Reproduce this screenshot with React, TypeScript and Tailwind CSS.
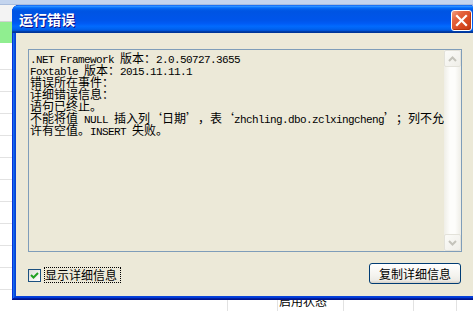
import React from "react";

const latin = "[font-family:'Liberation_Mono',monospace] text-[11px] tracking-[-0.6px]";
const cjk = "[font-family:'Noto_Sans_CJK_SC',sans-serif]";

function L({ children }: { children: React.ReactNode }) {
  return <span className={latin}>{children}</span>;
}
function QL() {
  return <span className="inline-block w-[12px] text-right">‘</span>;
}
function QR() {
  return <span className="inline-block w-[12px] text-left">’</span>;
}

function Line({ children }: { children: React.ReactNode }) {
  return <div className="h-[12px] leading-[12px] whitespace-pre">{children}</div>;
}

function GridRow({ text }: { text?: string }) {
  return (
    <div className="flex h-[22px] border-b border-[#e2e2e2]">
      <div className="w-[227px]" />
      <div className="w-[50px] border-l border-[#e2e2e2]" />
      <div className="w-[66px] border-l border-[#e2e2e2] pl-[1px] pt-[5px] text-[12px] leading-[12px] text-black">
        {text}
      </div>
      <div className="w-[70px] border-l border-[#e2e2e2]" />
      <div className="w-[43px] border-l border-[#e2e2e2]" />
      <div className="flex-1 border-l border-[#e2e2e2]" />
    </div>
  );
}

function ScrollBtn({ up }: { up: boolean }) {
  return (
    <div className="h-[17px] w-[17px] shrink-0 rounded-[2px] border border-[#e3e2da] bg-[linear-gradient(135deg,#fbfbf8_0%,#efeee8_100%)] flex items-center justify-center">
      <svg width="9" height="6" viewBox="0 0 9 6">
        {up ? (
          <polyline points="1,5 4.5,1.5 8,5" fill="none" stroke="#c4c3bb" strokeWidth="2" />
        ) : (
          <polyline points="1,1 4.5,4.5 8,1" fill="none" stroke="#c4c3bb" strokeWidth="2" />
        )}
      </svg>
    </div>
  );
}

export default function App() {
  const rows = Array.from({ length: 11 }, (_, i) => i);
  return (
    <div className={`relative w-[473px] h-[311px] overflow-hidden bg-white ${cjk}`}>
      {/* background application grid */}
      <div className="flex flex-col">
        <div className="h-[5px] bg-[#c3d4ee] border-b border-[#a8bcdc]" />
        <div className="h-[17px] bg-[#f3f3f3] border-b border-[#d2d2d2]" />
        <div className="h-[21px] bg-[#90ee90]" />
        <div className="h-[27px] border-b border-[#e2e2e2]" />
        {rows.map((i) => (
          <GridRow key={i} text={i === 10 ? "启用状态" : undefined} />
        ))}
      </div>

      {/* dialog window */}
      <div className="absolute left-[12px] top-[5px] w-[464px] h-[295px] rounded-t-[7px] overflow-hidden bg-[#0842d8] flex flex-col shadow-[inset_-1px_-1px_#00138c,inset_1px_1px_#0831d9,inset_-2px_-2px_#001ea0,inset_2px_2px_#166aee,inset_-3px_-3px_#003bda,inset_3px_3px_#0855dd]">
        {/* title bar */}
        <div className="h-[28px] shrink-0 flex items-start justify-between pl-[7px] pr-[4px] bg-[linear-gradient(180deg,#0058ee_0%,#3593ff_4%,#288eff_6%,#127dff_8%,#036ffc_10%,#0262ee_14%,#0057e5_20%,#0054e3_24%,#0055eb_56%,#005bf5_66%,#026afe_76%,#0062ef_86%,#0052d6_92%,#0040ab_94%,#003092_100%)]">
          <div className="h-[28px] flex items-center text-white font-bold text-[14px] leading-[14px] [text-shadow:1px_1px_#0f1089]">
            运行错误
          </div>
          <div className="mt-[5px] w-[21px] h-[21px] rounded-[3px] border border-white bg-[linear-gradient(135deg,#f3a083_0%,#e4643f_30%,#d84a22_65%,#c23b14_100%)] flex items-center justify-center shadow-[inset_-1px_-1px_#b5330e]">
            <svg width="13" height="13" viewBox="0 0 13 13">
              <line x1="2" y1="2" x2="11" y2="11" stroke="white" strokeWidth="2.2" strokeLinecap="square" />
              <line x1="11" y1="2" x2="2" y2="11" stroke="white" strokeWidth="2.2" strokeLinecap="square" />
            </svg>
          </div>
        </div>

        {/* frame + client */}
        <div className="flex-1 flex px-[4px] pb-[4px]">
          <div className="flex-1 bg-[#ece9d8] flex flex-col pt-[16px] px-[12px]">
            {/* text box */}
            <div className="h-[203px] border border-[#7f9db9] bg-[#ece9d8] flex">
              <div className="flex-1 pl-[1px] pt-[2px] text-[12px] text-black">
                <Line>
                  <L>.NET Framework </L>版本：<L>2.0.50727.3655</L>
                </Line>
                <Line>
                  <L>Foxtable </L>版本：<L>2015.11.11.1</L>
                </Line>
                <Line>错误所在事件：</Line>
                <Line>详细错误信息：</Line>
                <Line>语句已终止。</Line>
                <Line>
                  不能将值<L> NULL </L>插入列<QL />日期<QR />，表<QL />
                  <L>zhchling.dbo.zclxingcheng</L>
                  <QR />；列不允
                </Line>
                <Line>
                  许有空值。<L>INSERT </L>失败。
                </Line>
              </div>
              <div className="w-[17px] flex flex-col bg-[linear-gradient(to_right,#efeee7_0%,#fdfdfb_35%,#fdfdfb_65%,#eeede6_100%)]">
                <ScrollBtn up />
                <div className="flex-1" />
                <ScrollBtn up={false} />
              </div>
            </div>

            {/* bottom row */}
            <div className="mt-[11px] flex items-start justify-between">
              <div className="mt-[4px] h-[16px] flex items-center">
                <div className="w-[13px] h-[13px] border border-[#1c5180] bg-[linear-gradient(135deg,#dcdcd7_0%,#ffffff_100%)] flex items-center justify-center">
                  <svg width="9" height="9" viewBox="0 0 9 9">
                    <polyline points="1,4 3.5,6.5 8,2" fill="none" stroke="#21a121" strokeWidth="2" />
                  </svg>
                </div>
                <div className="ml-[3px] h-[16px] border border-dotted border-black pr-[3px] flex items-center text-[12px] leading-[12px] text-black">
                  显示详细信息
                </div>
              </div>
              <div className="mr-[1px] w-[92px] h-[21px] rounded-[3px] border border-[#003c74] bg-[linear-gradient(180deg,#ffffff_0%,#f4f3ee_60%,#ecebe6_86%,#d6d0c5_100%)] flex items-center justify-center text-[12px] leading-[12px] text-black">
                复制详细信息
              </div>
            </div>
          </div>
        </div>
      </div>
    </div>
  );
}
